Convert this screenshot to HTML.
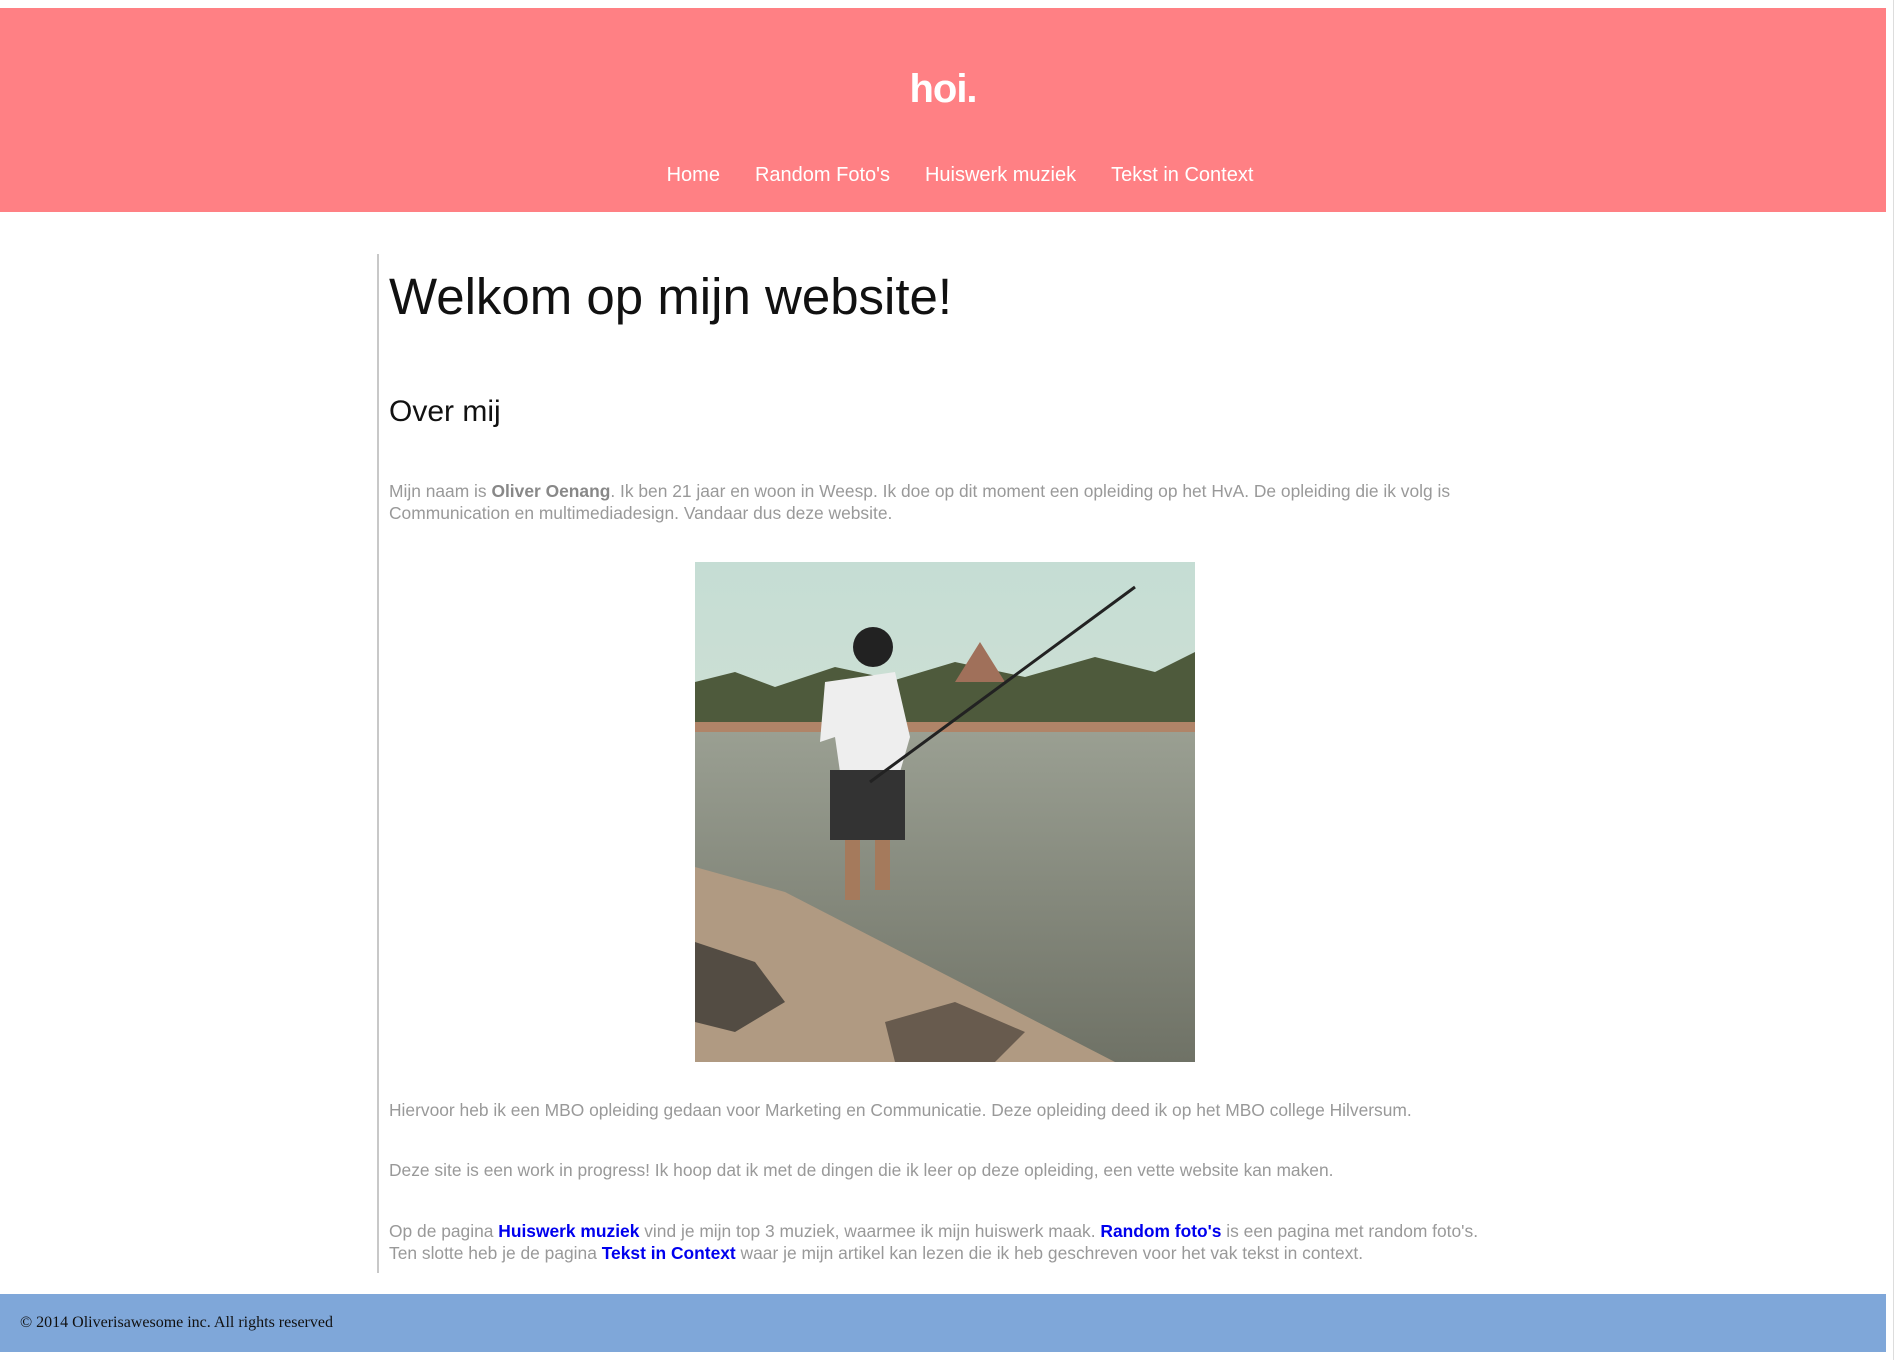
<!DOCTYPE html>
<html><head><meta charset="utf-8"><style>
html,body{margin:0;padding:0;background:#fff;width:1896px;height:1360px;overflow:hidden;font-family:"Liberation Sans",Arial,sans-serif}
.header{position:absolute;left:0;top:8px;width:1886px;height:204px;background:#ff8084}
.hoi{position:absolute;left:0;width:1886px;top:56px;text-align:center;color:#fff;font-weight:bold;font-size:40px;line-height:50px;letter-spacing:-1px}
.nav{position:absolute;left:17px;width:1886px;top:155px;text-align:center;color:#fff;font-size:20px;line-height:24px}
.nav span{margin:0 17.5px}
.vline{position:absolute;left:377px;top:254px;width:2px;height:1019px;background:#c8c8c8}
.t{position:absolute;left:389px;color:#999;font-size:17.4px;line-height:22px;white-space:nowrap}
.t b{color:#888}
.t a{color:#0000ee;font-weight:bold;text-decoration:none}
h1{position:absolute;left:389px;top:267px;margin:0;font-weight:normal;font-size:51px;line-height:60px;color:#111}
h2{position:absolute;left:389px;top:392px;margin:0;font-weight:normal;font-size:30px;line-height:40px;color:#111}
.footer{position:absolute;left:0;top:1294px;width:1886px;height:58px;background:#7fa7d9}
.footer span{position:absolute;left:20px;top:20px;font-family:"Liberation Serif",serif;font-size:16px;color:#111}
.sb{position:absolute;left:1893px;top:0;width:1px;height:1360px;background:#ddd}
</style></head><body>
<div class="header"><div class="hoi">hoi.</div>
<div class="nav"><span>Home</span><span>Random Foto's</span><span>Huiswerk muziek</span><span>Tekst in Context</span></div></div>
<div class="sb"></div>
<div class="vline"></div>
<h1>Welkom op mijn website!</h1>
<h2>Over mij</h2>
<div class="t" style="top:480px">Mijn naam is <b>Oliver Oenang</b>. Ik ben 21 jaar en woon in Weesp. Ik doe op dit moment een opleiding op het HvA. De opleiding die ik volg is<br>Communication en multimediadesign. Vandaar dus deze website.</div>
<svg style="position:absolute;left:695px;top:562px" width="500" height="500" viewBox="0 0 500 500">
<defs><linearGradient id="s" x1="0" y1="0" x2="0" y2="1"><stop offset="0" stop-color="#c5ddd4"/><stop offset="1" stop-color="#dfe5d6"/></linearGradient>
<linearGradient id="w" x1="0" y1="0" x2="0" y2="1"><stop offset="0" stop-color="#9a9f92"/><stop offset="1" stop-color="#6f7266"/></linearGradient></defs>
<rect width="500" height="500" fill="url(#s)"/>
<path d="M0 120 L40 110 L80 125 L140 105 L200 118 L260 100 L330 115 L400 95 L460 110 L500 90 L500 170 L0 170Z" fill="#4e5a3c"/>
<path d="M260 120 L285 80 L310 120Z" fill="#a0705a"/>
<rect x="0" y="160" width="500" height="12" fill="#b08468"/>
<rect x="0" y="170" width="500" height="330" fill="url(#w)"/>
<path d="M0 305 L90 330 L420 500 L0 500Z" fill="#b09a82"/>
<path d="M0 380 L60 400 L90 440 L40 470 L0 460Z" fill="#3c3833" opacity=".8"/>
<path d="M190 460 L260 440 L330 470 L300 500 L200 500Z" fill="#4a4038" opacity=".7"/>
<circle cx="178" cy="85" r="20" fill="#222"/>
<path d="M130 120 L200 110 L215 175 L205 210 L145 210 L140 175 L125 180Z" fill="#eee"/>
<rect x="135" y="208" width="75" height="70" fill="#333"/>
<rect x="150" y="278" width="15" height="60" fill="#a57a5c"/><rect x="180" y="278" width="15" height="50" fill="#a57a5c"/>
<path d="M175 220 L440 25" stroke="#222" stroke-width="3"/>
</svg>
<div class="t" style="top:1099px">Hiervoor heb ik een MBO opleiding gedaan voor Marketing en Communicatie. Deze opleiding deed ik op het MBO college Hilversum.</div>
<div class="t" style="top:1159px">Deze site is een work in progress! Ik hoop dat ik met de dingen die ik leer op deze opleiding, een vette website kan maken.</div>
<div class="t" style="top:1220px">Op de pagina <a>Huiswerk muziek</a> vind je mijn top 3 muziek, waarmee ik mijn huiswerk maak. <a>Random foto's</a> is een pagina met random foto's.<br>Ten slotte heb je de pagina <a>Tekst in Context</a> waar je mijn artikel kan lezen die ik heb geschreven voor het vak tekst in context.</div>
<div class="footer"><span>© 2014 Oliverisawesome inc. All rights reserved</span></div>
</body></html>
